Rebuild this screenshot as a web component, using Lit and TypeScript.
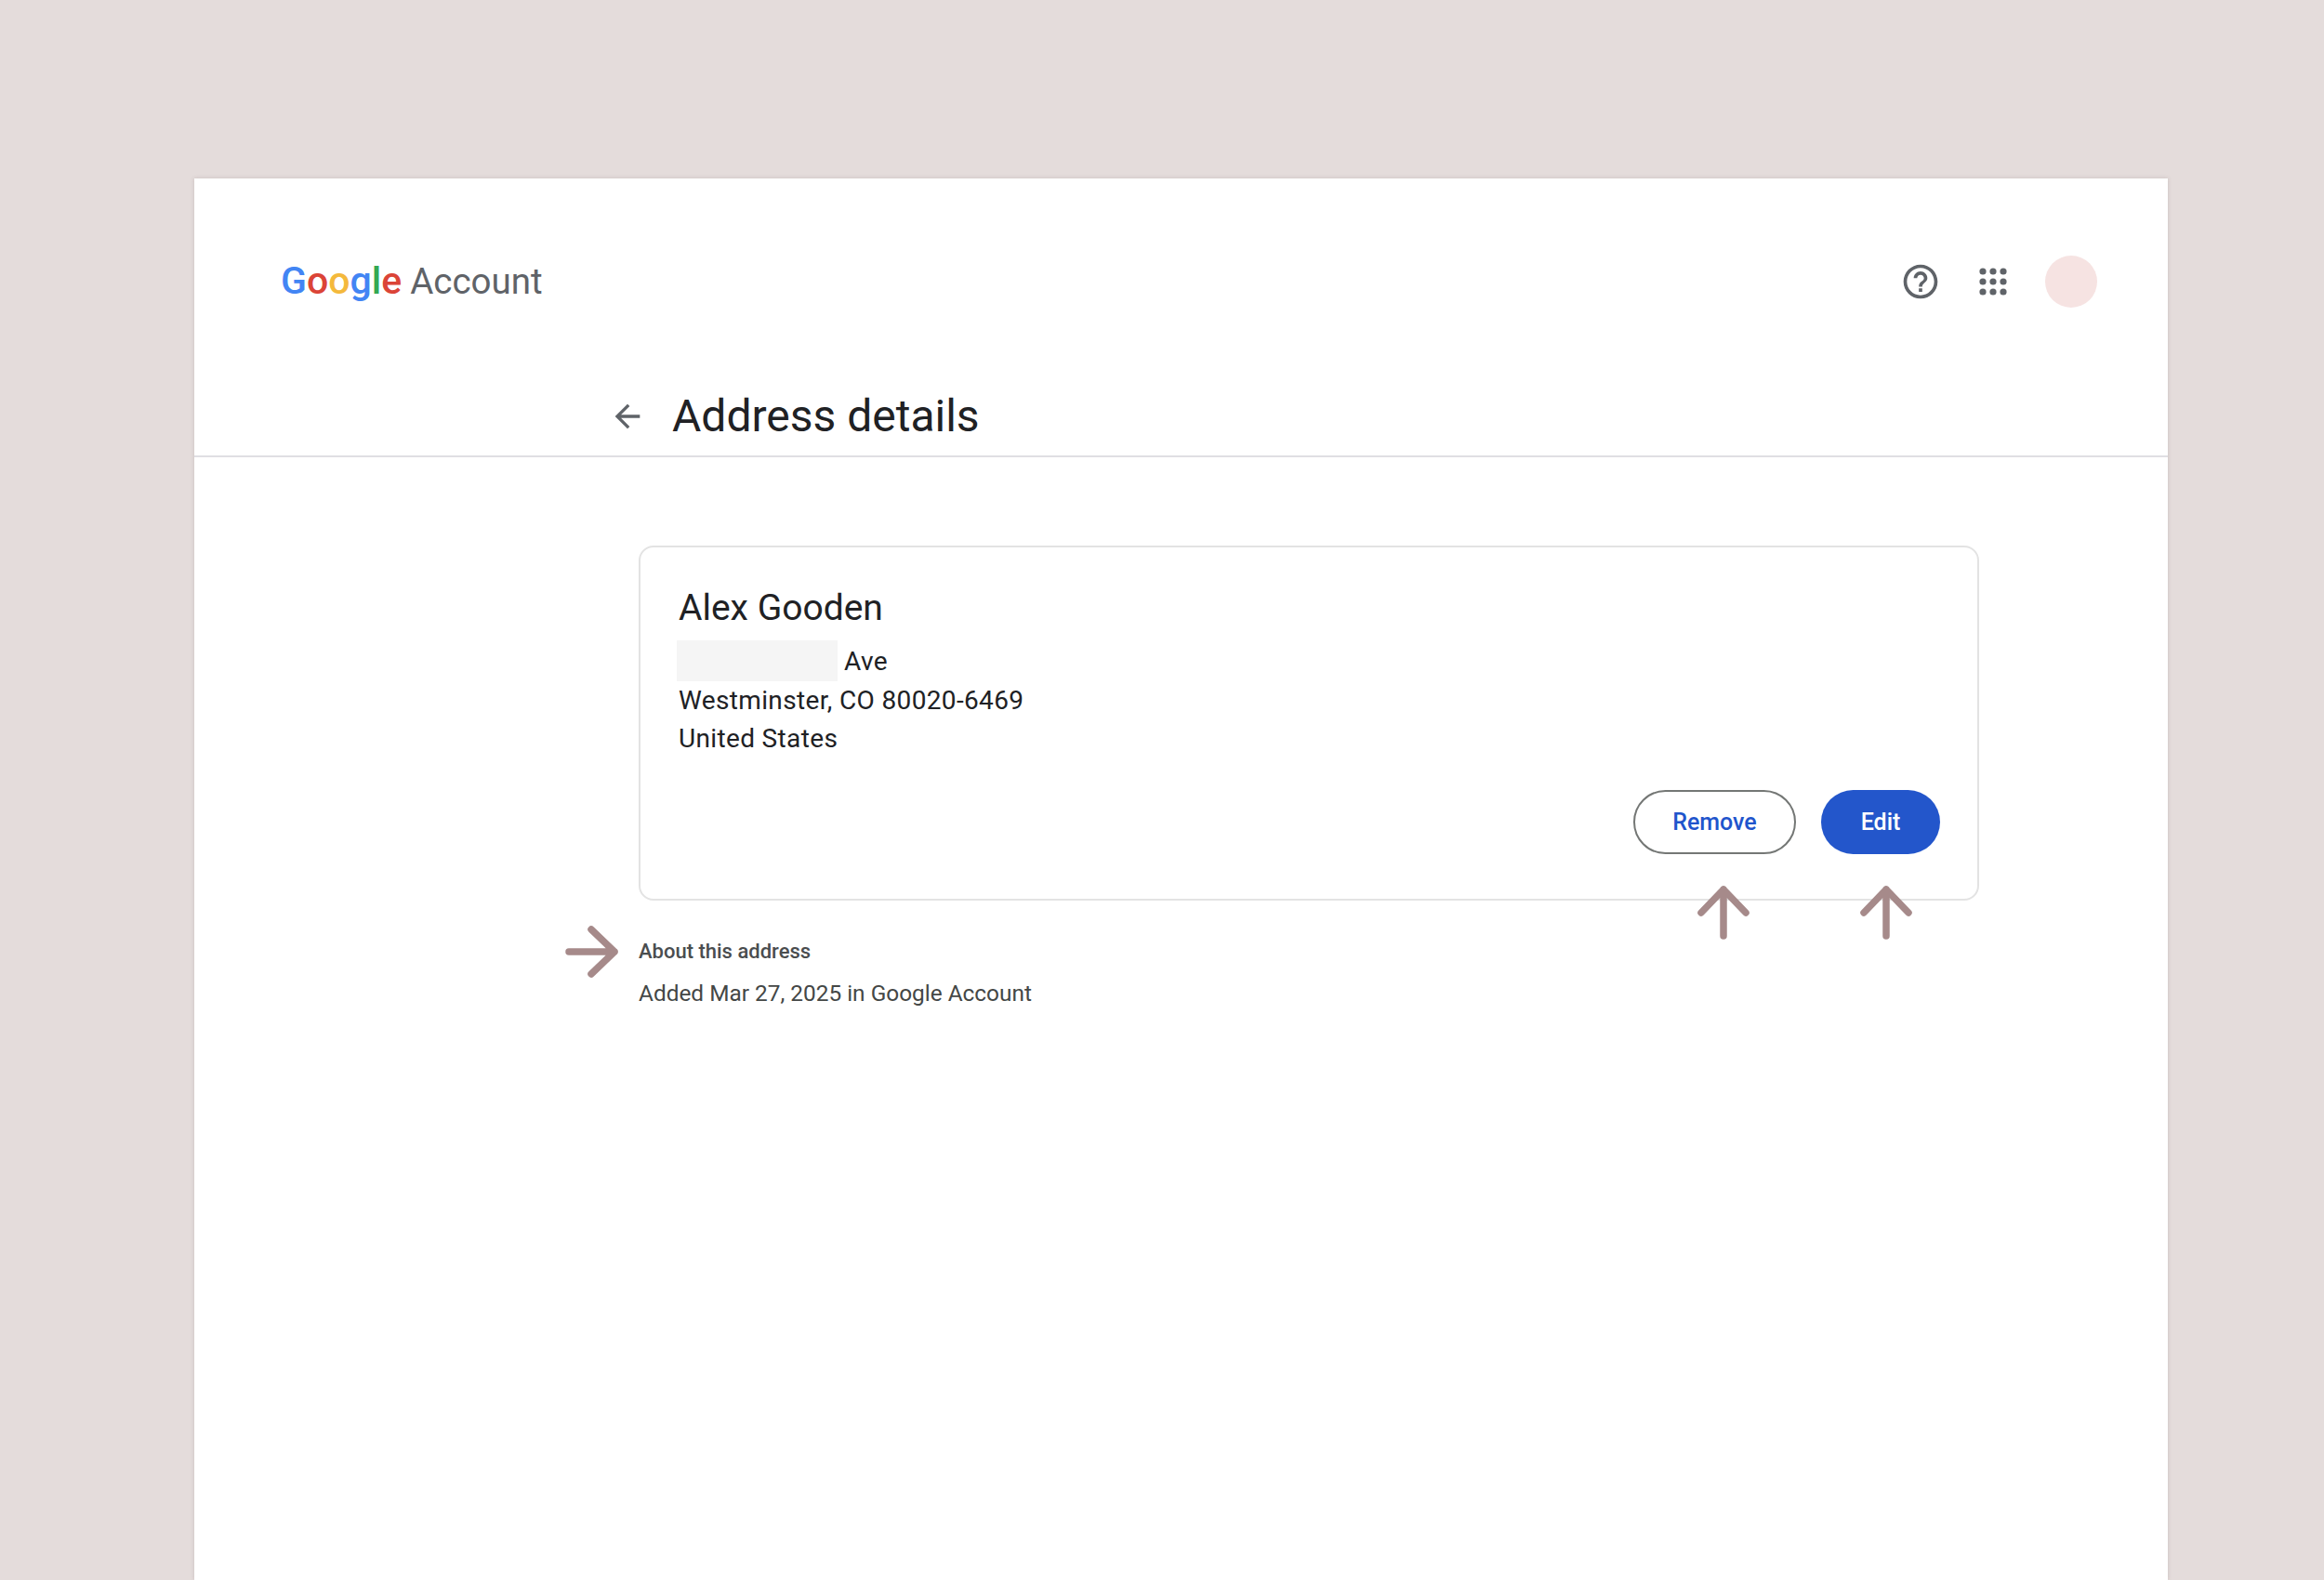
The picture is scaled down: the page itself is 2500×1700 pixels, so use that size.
import { LitElement, html, css, svg } from 'lit';
import { customElement } from 'lit/decorators.js';

const LOGO = [
  ['G', '#4285f4'],
  ['o', '#db4437'],
  ['o', '#f4b93c'],
  ['g', '#4285f4'],
  ['l', '#34a853'],
  ['e', '#db4437'],
];

const DOTS = [5, 16, 27].flatMap((y) => [5, 16, 27].map((x) => svg`<circle cx=${x} cy=${y} r="3.6"></circle>`));

@customElement('app-root')
export class AppRoot extends LitElement {
  static styles = css`
    :host {
      display: block;
      height: 1700px;
      overflow: hidden;
      background: #e4dcdb;
      font-family: Roboto, 'Liberation Sans', sans-serif;
    }
    .sheet {
      position: relative;
      box-sizing: border-box;
      width: 2123px;
      height: 1508px;
      margin: 192px 0 0 209px;
      background: #fff;
      box-shadow: 0 0 4px rgba(120, 100, 100, 0.25);
    }
    .top {
      display: flex;
      align-items: center;
      justify-content: space-between;
      height: 222px;
      padding: 0 76px 0 93px;
    }
    .logo {
      display: flex;
      align-items: baseline;
      gap: 9px;
      margin-bottom: 3px;
      font-size: 38.5px;
      color: #5f6368;
    }
    .google {
      font-size: 41px;
      font-weight: 500;
    }
    .tools {
      display: flex;
      align-items: center;
    }
    .help {
      width: 44px;
      height: 44px;
      fill: #5f6368;
    }
    .apps {
      width: 32px;
      height: 32px;
      margin-left: 40px;
      fill: #5f6368;
    }
    .avatar {
      width: 56px;
      height: 56px;
      margin-left: 40px;
      border-radius: 50%;
      background: #f6e3e2;
    }
    .title-row {
      display: flex;
      align-items: center;
      height: 78px;
      padding: 0 0 8px 446px;
      border-bottom: 2px solid #e0dfe3;
      box-sizing: border-box;
    }
    .back {
      width: 40px;
      height: 40px;
      fill: #5f6368;
    }
    h1 {
      margin: 0 0 0 28px;
      font-size: 48px;
      font-weight: 400;
      line-height: 60px;
      color: #202124;
    }
    .content {
      width: 1442px;
      margin: 95px 0 0 478px;
    }
    .card {
      box-sizing: border-box;
      height: 382px;
      padding: 40px 40px 47px 41px;
      border: 2px solid #e3e3e3;
      border-radius: 16px;
    }
    .name {
      font-size: 39px;
      line-height: 50px;
      color: #202124;
    }
    .address {
      margin-top: 10px;
      font-size: 28px;
      letter-spacing: 0.35px;
      line-height: 41px;
      color: #202124;
    }
    .street {
      display: flex;
      align-items: center;
      gap: 7px;
    }
    .redacted {
      width: 173px;
      height: 44px;
      margin-left: -2px;
      background: #f5f5f5;
    }
    .actions {
      display: flex;
      justify-content: flex-end;
      gap: 27px;
      margin-top: 35px;
    }
    button {
      box-sizing: border-box;
      height: 69px;
      border-radius: 35px;
      font: 500 25px Roboto, 'Liberation Sans', sans-serif;
    }
    .outline {
      width: 175px;
      border: 2px solid #747775;
      background: #fff;
      color: #1f55cc;
    }
    .filled {
      width: 128px;
      border: 0;
      background: #2356cb;
      color: #fff;
    }
    .about {
      margin-top: 40px;
      font-size: 22px;
      font-weight: 500;
      line-height: 30px;
      color: #4a4d4f;
    }
    .added {
      margin-top: 13px;
      font-size: 24.4px;
      line-height: 34px;
      color: #444746;
    }
    .mark {
      position: absolute;
      fill: none;
      stroke: #a68a8a;
      stroke-width: 7.5;
      stroke-linecap: round;
      stroke-linejoin: round;
    }
    .up {
      width: 60px;
      height: 60px;
      top: 759px;
    }
    .remove-mark {
      left: 1615px;
    }
    .edit-mark {
      left: 1790px;
    }
    .right {
      width: 60px;
      height: 60px;
      left: 398px;
      top: 802px;
    }
  `;

  render() {
    return html`
      <div class="sheet">
        <header class="top">
          <div class="logo">
            <span class="google">${LOGO.map(([c, color]) => html`<span style="color:${color}">${c}</span>`)}</span>
            <span>Account</span>
          </div>
          <div class="tools">
            <svg class="help" viewBox="0 0 24 24"><path d="M11 18h2v-2h-2v2zm1-16C6.48 2 2 6.48 2 12s4.48 10 10 10 10-4.48 10-10S17.52 2 12 2zm0 18c-4.41 0-8-3.59-8-8s3.59-8 8-8 8 3.59 8 8-3.59 8-8 8zm0-14c-2.21 0-4 1.79-4 4h2c0-1.1.9-2 2-2s2 .9 2 2c0 2-3 1.75-3 5h2c0-2.25 3-2.5 3-5 0-2.21-1.79-4-4-4z"></path></svg>
            <svg class="apps" viewBox="0 0 32 32">${DOTS}</svg>
            <div class="avatar"></div>
          </div>
        </header>
        <div class="title-row">
          <svg class="back" viewBox="0 0 24 24"><path d="M20 11H7.83l5.59-5.59L12 4l-8 8 8 8 1.41-1.41L7.83 13H20v-2z"></path></svg>
          <h1>Address details</h1>
        </div>
        <main class="content">
          <section class="card">
            <div class="name">Alex Gooden</div>
            <div class="address">
              <div class="street"><span class="redacted"></span><span>Ave</span></div>
              <div>Westminster, CO 80020-6469</div>
              <div>United States</div>
            </div>
            <div class="actions">
              <button class="outline">Remove</button>
              <button class="filled">Edit</button>
            </div>
          </section>
          <div class="about">About this address</div>
          <div class="added">Added Mar 27, 2025 in Google Account</div>
        </main>
        <svg class="mark up remove-mark" viewBox="0 0 60 60"><path d="M30 56V6M6 31 30 6l24 25"></path></svg>
        <svg class="mark up edit-mark" viewBox="0 0 60 60"><path d="M30 56V6M6 31 30 6l24 25"></path></svg>
        <svg class="mark right" viewBox="0 0 60 60"><path d="M5 30h49M29 6l25 24-25 24"></path></svg>
      </div>
    `;
  }
}
